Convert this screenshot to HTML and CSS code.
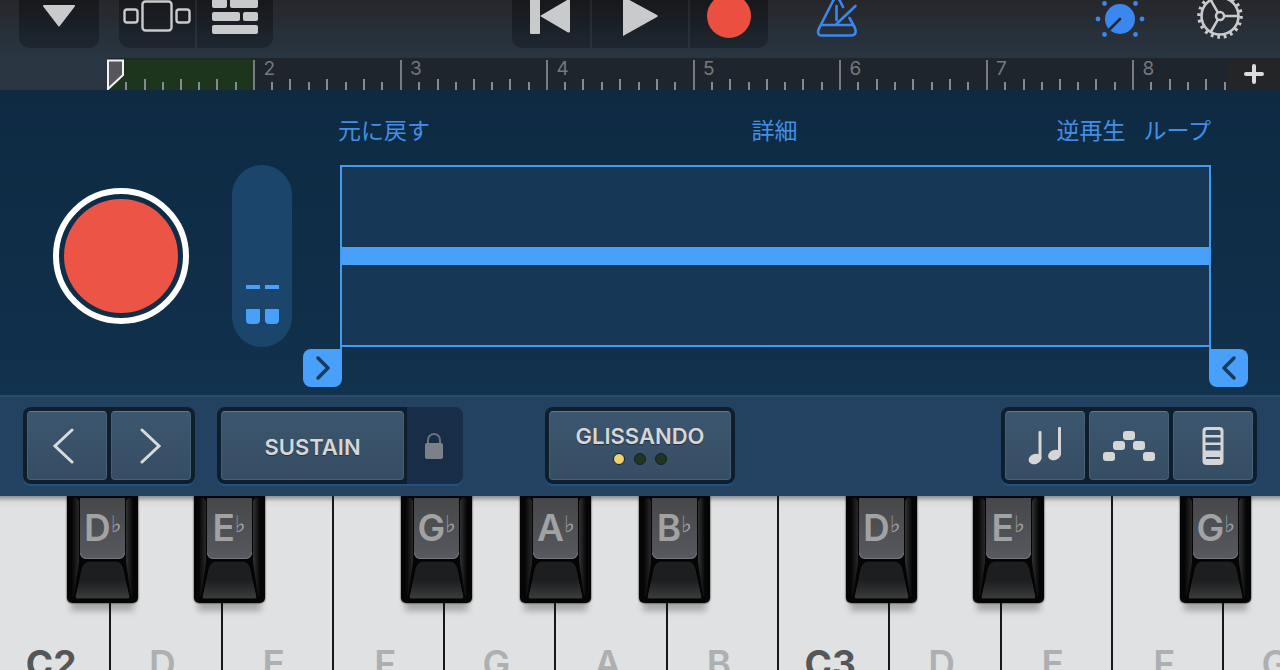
FILE: index.html
```html
<!DOCTYPE html>
<html lang="ja">
<head>
  <meta charset="utf-8">
  <title>Sampler</title>
  <link rel="stylesheet" href="styles.css">
</head>
<body>
  <!-- shared body of the black keys -->
  <svg class="defs" width="0" height="0" aria-hidden="true">
    <defs>
      <linearGradient id="cap" x1="0" y1="0" x2="0" y2="1">
        <stop offset="0" stop-color="#46474a"/>
        <stop offset="1" stop-color="#57595f"/>
      </linearGradient>
      <linearGradient id="lip" x1="0" y1="0" x2="0" y2="1">
        <stop offset="0.5" stop-color="#1d1e1f"/>
        <stop offset="1" stop-color="#3b3c3e"/>
      </linearGradient>
      <linearGradient id="side" x1="0" y1="0" x2="1" y2="0">
        <stop offset="0" stop-color="#060606"/>
        <stop offset="1" stop-color="#29292b"/>
      </linearGradient>
      <linearGradient id="side2" x1="1" y1="0" x2="0" y2="0">
        <stop offset="0" stop-color="#060606"/>
        <stop offset="1" stop-color="#303234"/>
      </linearGradient>
      <symbol id="black" viewBox="0 0 71 107">
        <path d="M0 0H71V102a5 5 0 0 1-5 5H5a5 5 0 0 1-5-5Z" fill="#050505"/>
        <path d="M5 3Q11 0 12 6V66L7 100H5Z" fill="url(#side)"/>
        <path d="M66 3Q60 0 59 6V66L64 100H66Z" fill="url(#side2)"/>
        <path d="M13 2H58V57a6 6 0 0 1-6 6H19a6 6 0 0 1-6-6Z" fill="url(#cap)"/>
        <path d="M13.500 57a6 6 0 0 0 6 5.500H51.500a6 6 0 0 0 6-5.500" fill="none" stroke="#77787d"/>
        <path d="M21 65H50Q55 66 57 73L63 101Q63 103 61 103H10Q8 103 8 101L14 73Q16 66 21 65Z" fill="url(#lip)" stroke="#000"/>
      </symbol>
    </defs>
  </svg>

  <header class="toolbar">
    <div class="tools-left">
      <button class="tool" aria-label="Menu">
        <svg width="34" height="24" viewBox="0 0 34 24"><path d="M2 2H32L17 21.500Z" fill="#c9cacc" stroke="#c9cacc" stroke-width="2" stroke-linejoin="round"/></svg>
      </button>
      <div class="tool-group">
        <button class="tool" aria-label="Browser">
          <svg width="68" height="32" viewBox="0 0 68 32" fill="none" stroke="#c9cacc" stroke-width="2.400"><rect x="1.500" y="9.500" width="13" height="13" rx="2.500"/><rect x="19.500" y="1.500" width="29" height="29" rx="3"/><rect x="53.500" y="9.500" width="13" height="13" rx="2.500"/></svg>
        </button>
        <button class="tool" aria-label="Tracks">
          <svg width="46" height="35" viewBox="0 0 46 35" fill="#c9cacc"><rect width="15" height="9" rx="2"/><rect x="18" width="28" height="9" rx="2"/><rect y="13" width="28" height="9" rx="2"/><rect x="31" y="13" width="15" height="9" rx="2"/><rect y="26" width="46" height="9" rx="2"/></svg>
        </button>
      </div>
    </div>
    <div class="tool-group">
      <button class="tool" aria-label="Rewind">
        <svg width="44" height="38" viewBox="0 0 44 38" fill="#c9cacc"><rect x="1" y="0" width="10" height="37" rx="1"/><path d="M11 19L39 2.500Q41 2 41 4V34Q41 36 39 35.500Z"/></svg>
      </button>
      <button class="tool play" aria-label="Play">
        <svg width="38" height="42" viewBox="0 0 38 42"><path d="M2 1.500L36 20Q37.500 21 36 22L2 41Z" fill="#c9cacc"/></svg>
      </button>
      <button class="tool" aria-label="Record"><span class="rec-dot"></span></button>
    </div>
    <div class="tools-right">
      <button class="flat metronome" aria-label="Metronome">
        <svg width="42" height="42" viewBox="0 0 42 42" fill="none" stroke="#3a87f0" stroke-width="2.600" stroke-linecap="round" stroke-linejoin="round"><path d="M33.500 23L38.500 32Q40 35 39.500 37.500Q39 40.500 35 40.500H6Q2 40.500 2 37Q2 35 4 31.500L17 6Q20.500 0 24 6L27 12"/><path d="M6 30H36"/><path d="M20.500 11V25M20.500 29L39.500 11"/></svg>
      </button>
      <button class="flat" aria-label="Track controls">
        <svg width="50" height="50" viewBox="0 0 50 50" fill="#3a87f0"><circle cx="25" cy="28" r="15"/><circle cx="3" cy="28" r="2.400"/><circle cx="47" cy="28" r="2.400"/><circle cx="9.500" cy="12.500" r="2.400"/><circle cx="40.500" cy="12.500" r="2.400"/><circle cx="9.500" cy="43.500" r="2.400"/><circle cx="40.500" cy="43.500" r="2.400"/><circle cx="25" cy="6" r="2.400"/><path d="M25 28L15 38" stroke="#23282e" stroke-width="2.600" stroke-linecap="round"/></svg>
      </button>
      <button class="flat" aria-label="Settings">
        <svg width="48" height="48" viewBox="0 0 48 48" fill="none" stroke="#c9cacc"><circle cx="24" cy="24" r="18.500" stroke-width="2.600"/><circle cx="24" cy="24" r="21" stroke-width="3.500" pathLength="80" stroke-dasharray="1.700 2.300"/><circle cx="24" cy="24" r="4" stroke-width="2.500"/><path d="M28.500 24H42M21.700 20.100L15 8.500M21.700 27.900L15 39.500" stroke-width="2.500"/></svg>
      </button>
    </div>
  </header>

  <div class="ruler">
    <div class="timeline">
      <div class="measure cycle"></div>
      <div class="measure">2</div>
      <div class="measure">3</div>
      <div class="measure">4</div>
      <div class="measure">5</div>
      <div class="measure">6</div>
      <div class="measure">7</div>
      <div class="measure">8</div>
      <svg class="playhead" width="18" height="31" viewBox="0 0 18 31"><path d="M1 1.500H16V16L1 30Z" fill="#55565a" stroke="#f2f2f2" stroke-width="2"/></svg>
    </div>
    <button class="add" aria-label="Add section">
      <svg width="20" height="20" viewBox="0 0 20 20"><path d="M10 2V18M2 10H18" stroke="#dcdcdc" stroke-width="4" stroke-linecap="round"/></svg>
    </button>
  </div>

  <main class="sampler">
    <nav class="sample-actions">
      <button class="link">元に戻す</button>
      <button class="link">詳細</button>
      <div class="link-pair">
        <button class="link">逆再生</button>
        <button class="link">ループ</button>
      </div>
    </nav>
    <button class="record" aria-label="Record sample"></button>
    <div class="meter">
      <i class="peak"></i><i class="peak"></i>
      <i class="level"></i><i class="level"></i>
    </div>
    <div class="wave">
      <div class="wave-line"></div>
      <button class="trim trim-start" aria-label="Trim start">
        <svg width="14" height="24" viewBox="0 0 14 24"><path d="M2 2L12 12L2 22" fill="none" stroke="#173a5c" stroke-width="3.400" stroke-linecap="round" stroke-linejoin="round"/></svg>
      </button>
      <button class="trim trim-end" aria-label="Trim end">
        <svg width="14" height="24" viewBox="0 0 14 24"><path d="M12 2L2 12L12 22" fill="none" stroke="#173a5c" stroke-width="3.400" stroke-linecap="round" stroke-linejoin="round"/></svg>
      </button>
    </div>
  </main>

  <section class="controls">
    <div class="controls-left">
      <div class="pad-group">
        <button class="pad" aria-label="Octave down">
          <svg width="30" height="36" viewBox="0 0 30 36"><path d="M20 2L3 18L20 34" fill="none" stroke="#dadada" stroke-width="3" stroke-linecap="round"/></svg>
        </button>
        <button class="pad" aria-label="Octave up">
          <svg width="22" height="36" viewBox="0 0 22 36"><path d="M2 2L19 18L2 34" fill="none" stroke="#dadada" stroke-width="3" stroke-linecap="round"/></svg>
        </button>
      </div>
      <div class="pad-group sustain-group">
        <button class="pad sustain">SUSTAIN</button>
        <button class="lock" aria-label="Lock sustain">
          <svg width="20" height="28" viewBox="0 0 20 28"><path d="M4 12V8a6 6 0 0 1 12 0V12" fill="none" stroke="#66727f" stroke-width="2"/><rect x="1" y="11" width="18" height="16" rx="2" fill="#7b8189"/></svg>
        </button>
      </div>
    </div>
    <div class="pad-group">
      <button class="pad glissando">
        GLISSANDO
        <span class="leds"><i class="led on"></i><i class="led"></i><i class="led"></i></span>
      </button>
    </div>
    <div class="controls-right">
      <div class="pad-group">
        <button class="pad" aria-label="Scale">
          <svg width="34" height="40" viewBox="0 0 34 40" fill="#d6d6d6"><ellipse cx="7" cy="33" rx="6.500" ry="5" transform="rotate(-20 7 33)"/><ellipse cx="26.500" cy="29" rx="6.500" ry="5" transform="rotate(-20 26.500 29)"/><rect x="10.500" y="5" width="3" height="28" rx="1"/><rect x="30" y="1" width="3" height="28" rx="1"/></svg>
        </button>
        <button class="pad" aria-label="Arpeggiator">
          <svg width="52" height="32" viewBox="0 0 52 32" fill="#d6d6d6"><rect x="0" y="22" width="12" height="9" rx="3"/><rect x="10" y="11" width="12" height="9" rx="3"/><rect x="20" y="1" width="12" height="9" rx="3"/><rect x="30" y="11" width="12" height="9" rx="3"/><rect x="40" y="22" width="12" height="9" rx="3"/></svg>
        </button>
        <button class="pad" aria-label="Keyboard size">
          <svg width="22" height="40" viewBox="0 0 22 40"><rect x="0.500" y="1" width="21" height="38" rx="4" fill="#d6d6d6"/><path d="M5 4H17Q18.500 4 18.500 5.500V9H3.500V5.500Q3.500 4 5 4ZM3.500 11.500H18.500V16.500H3.500ZM3.500 19H18.500V24.500H3.500ZM4 31H18V33H4Z" fill="#38516a"/></svg>
        </button>
      </div>
    </div>
  </section>

  <section class="keyboard">
    <div class="key">
      <button class="white root">C2</button>
      <button class="black left"><svg><use href="#black"/></svg><span>D<sup>♭</sup></span></button>
    </div>
    <div class="key">
      <button class="white">D</button>
      <button class="black right"><svg><use href="#black"/></svg><span>E<sup>♭</sup></span></button>
    </div>
    <div class="key"><button class="white">E</button></div>
    <div class="key">
      <button class="white">F</button>
      <button class="black left"><svg><use href="#black"/></svg><span>G<sup>♭</sup></span></button>
    </div>
    <div class="key">
      <button class="white">G</button>
      <button class="black"><svg><use href="#black"/></svg><span>A<sup>♭</sup></span></button>
    </div>
    <div class="key">
      <button class="white">A</button>
      <button class="black right"><svg><use href="#black"/></svg><span>B<sup>♭</sup></span></button>
    </div>
    <div class="key"><button class="white">B</button></div>
    <div class="key">
      <button class="white root">C3</button>
      <button class="black left"><svg><use href="#black"/></svg><span>D<sup>♭</sup></span></button>
    </div>
    <div class="key">
      <button class="white">D</button>
      <button class="black right"><svg><use href="#black"/></svg><span>E<sup>♭</sup></span></button>
    </div>
    <div class="key"><button class="white">E</button></div>
    <div class="key">
      <button class="white">F</button>
      <button class="black left"><svg><use href="#black"/></svg><span>G<sup>♭</sup></span></button>
    </div>
    <div class="key"><button class="white">G</button></div>
  </section>
</body>
</html>
```

FILE: styles.css
```css
* {
  box-sizing: border-box;
}
body {
  margin: 0;
  height: 100vh;
  overflow: hidden;
  display: flex;
  flex-direction: column;
  font-family: Inter, "Noto Sans CJK JP", sans-serif;
  background-color: #0f2b44;
}
button {
  margin: 0;
  padding: 0;
  border: 0;
  background: none;
  font-family: inherit;
  color: inherit;
  cursor: pointer;
}
svg {
  display: block;
}
.defs {
  position: absolute;
}

/* top toolbar, its buttons run off the upper edge */
.toolbar {
  flex: none;
  display: grid;
  grid-template-columns: 1fr auto 1fr;
  grid-template-rows: 48px;
  align-items: end;
  padding-bottom: 10px;
  background: linear-gradient(#26272b, #293642);
}
.tools-left, .tools-right, .tool-group {
  display: flex;
}
.tools-left {
  gap: 20px;
  padding-left: 19px;
}
.tools-right {
  justify-content: flex-end;
  padding: 0 35px 0 48px;
}
.tool-group {
  gap: 2px;
}
.tool {
  width: 80px;
  height: 64px;
  display: flex;
  align-items: center;
  justify-content: center;
  border-radius: 10px;
  background: linear-gradient(#18191d 30%, #1d2730);
}
.tool-group .tool {
  width: 78px;
  border-radius: 0;
}
.tools-left .tool-group .tool {
  width: 76px;
}
.tool-group .tool.play {
  width: 96px;
}
.tool-group .tool:first-child {
  border-radius: 10px 0 0 10px;
}
.tool-group .tool:last-child {
  border-radius: 0 10px 10px 0;
}
.rec-dot {
  width: 44px;
  height: 44px;
  border-radius: 50%;
  background-color: #ea4f40;
}
.flat {
  width: 50px;
  height: 64px;
  margin-left: 50px;
  display: flex;
  align-items: center;
  justify-content: center;
}
.flat.metronome {
  width: 42px;
  margin: 0 auto 0 0;
}

/* bar ruler */
.ruler {
  flex: none;
  height: 32px;
  display: flex;
  padding-left: 107px;
  background-color: #293642;
}
.timeline {
  position: relative;
  flex: 1;
  display: flex;
  overflow: hidden;
  padding-top: 2px;
  background-color: #1e252c;
}
.measure {
  flex: 0 0 13.08%;
  padding-left: 10px;
  font-size: 19px;
  line-height: 18px;
  color: #74797e;
  background:
    linear-gradient(#777c81, #777c81) left / 2px 100% no-repeat,
    repeating-linear-gradient(to right, #858a8e 0 2px, transparent 2px 25%) bottom / 100% 11px no-repeat,
    repeating-linear-gradient(to right, #858a8e 0 2px, transparent 2px 12.5%) bottom / 100% 8px no-repeat;
}
.cycle {
  background-color: #1d351d;
}
.playhead {
  position: absolute;
  left: 0;
  bottom: 0;
}
.add {
  flex: none;
  width: 53px;
  display: flex;
  align-items: center;
  justify-content: center;
  background-color: #232527;
}

/* sampler */
.sampler {
  flex: none;
  display: grid;
  grid-template-columns: 136px 60px 1fr;
  grid-template-rows: 75px 182px;
  align-items: center;
  column-gap: 43px;
  padding: 0 69px 48px 53px;
  background: linear-gradient(#0e2a43, #11304b 90%, #11334f);
}
.sample-actions {
  grid-column: 3;
  display: grid;
  grid-template-columns: 1fr auto 1fr;
  align-items: center;
  justify-items: start;
  margin-left: 3px;
  padding-top: 6px;
}
.link {
  font-size: 23px;
  line-height: 34px;
  color: #4190e5;
}
.link-pair {
  display: flex;
  gap: 18px;
  justify-self: end;
}
.record {
  width: 136px;
  height: 136px;
  border: 6px solid #fff;
  border-radius: 50%;
  padding: 5px;
  background-color: #ec5545;
  background-clip: content-box;
}
.meter {
  height: 182px;
  display: grid;
  grid-template-columns: 14px 14px;
  gap: 20px 5px;
  align-content: end;
  justify-content: center;
  padding-bottom: 23px;
  border-radius: 30px;
  background-color: #1b456b;
}
.peak {
  height: 4px;
  background-color: #48a0fa;
}
.level {
  height: 15px;
  border-radius: 1px 1px 4px 4px;
  background-color: #48a0fa;
}
.wave {
  position: relative;
  height: 182px;
  margin-left: 5px;
  display: flex;
  align-items: center;
  border: 2px solid #429af5;
  background-color: #163755;
}
.wave-line {
  flex: 1;
  height: 18px;
  background-color: #48a0fa;
}
.trim {
  position: absolute;
  top: 182px;
  width: 39px;
  height: 38px;
  display: flex;
  align-items: center;
  justify-content: center;
  background-color: #48a0fa;
}
.trim::before {
  content: "";
  position: absolute;
  top: -4px;
  width: 2px;
  height: 6px;
  background-color: #429af5;
}
.trim-start {
  right: 100%;
  border-radius: 8px 0 8px 8px;
}
.trim-start::before {
  right: 0;
}
.trim-end {
  left: 100%;
  border-radius: 0 8px 8px 8px;
}
.trim-end::before {
  left: 0;
}

/* performance controls */
.controls {
  flex: none;
  display: grid;
  grid-template-columns: 1fr auto 1fr;
  padding: 10px 23px 12px;
  border-top: 2px solid #2d4b68;
  background-color: #234160;
}
.controls-left {
  display: flex;
  gap: 22px;
}
.controls-right {
  display: flex;
  justify-content: flex-end;
}
.pad-group {
  display: flex;
  gap: 4px;
  padding: 4px;
  border-radius: 8px;
  background-color: #0f1e2d;
  box-shadow: 0 2px 1px #27527f;
}
.pad {
  width: 80px;
  height: 69px;
  display: flex;
  align-items: center;
  justify-content: center;
  border-radius: 4px;
  border: 1px solid #456078;
  border-top-color: #66798b;
  background: linear-gradient(#3c566f, #364e64);
  color: #d6d6d6;
  font-size: 22px;
  line-height: 26px;
  font-weight: 600;
  text-shadow: 0 1px 1px #22303e;
}
.sustain-group {
  gap: 0;
  padding-right: 0;
  background: linear-gradient(to right, #0f1e2d 190px, #182d47 190px);
}
.sustain {
  width: 183px;
  padding-top: 3px;
}
.lock {
  width: 59px;
  display: flex;
  align-items: center;
  justify-content: center;
}
.glissando {
  width: 182px;
  flex-direction: column;
  gap: 4px;
  padding-bottom: 4px;
}
.leds {
  display: flex;
  gap: 9px;
}
.led {
  width: 12px;
  height: 12px;
  border: 1px solid #151f22;
  border-radius: 50%;
  background-color: #203524;
}
.led.on {
  background-color: #f0cf73;
}

/* keyboard, cut off by the lower edge */
.keyboard {
  flex: 1;
  min-height: 0;
  display: flex;
  overflow: hidden;
  background-color: #dfe0e1;
}
.key {
  position: relative;
  flex: 0 0 calc(100% / 11.5);
}
.white {
  width: 100%;
  height: 240px;
  display: flex;
  justify-content: center;
  align-items: flex-start;
  padding: 144px 7px 0 0;
  border-right: 2px solid #17181a;
  background: linear-gradient(#8f9091, #d9dadb 6px, #e0e1e2 12px);
  color: #aeafb0;
  font-size: 37px;
  line-height: 48px;
  font-weight: 600;
}
.white.root {
  color: #555658;
  font-weight: 700;
}
.black {
  position: absolute;
  z-index: 1;
  top: 0;
  left: 100%;
  width: 71px;
  height: 107px;
  margin-left: -36px;
  border-radius: 0 0 5px 5px;
  box-shadow: 0 12px 6px -4px rgba(0, 0, 0, 0.25), 0 0 2px #000;
}
.black.left {
  margin-left: -44px;
}
.black.right {
  margin-left: -29px;
}
.black svg {
  width: 71px;
  height: 107px;
}
.black span {
  position: absolute;
  top: 8px;
  left: 0;
  width: 100%;
  color: #a1a2a3;
  font-size: 37px;
  line-height: 48px;
  font-weight: 600;
}
.black sup {
  font-family: "DejaVu Sans", sans-serif;
  font-size: 23px;
  line-height: 0;
  vertical-align: 9px;
}
```
